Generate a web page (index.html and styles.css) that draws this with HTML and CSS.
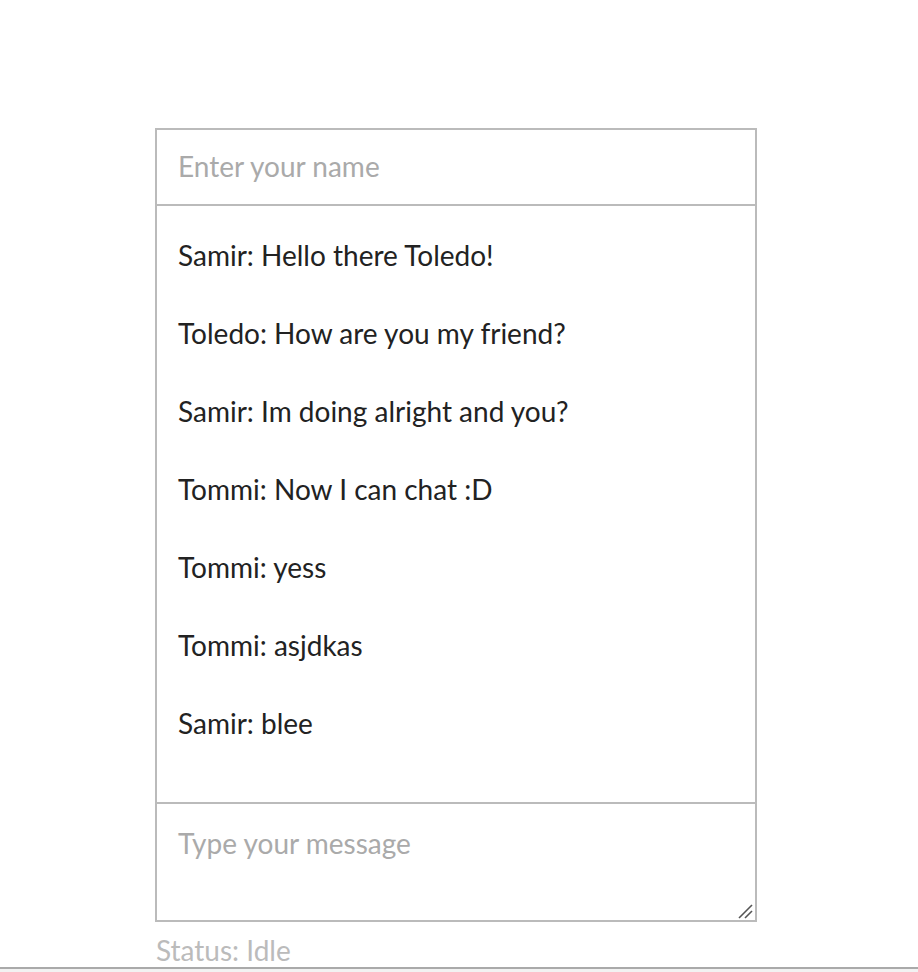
FILE: index.html
```html
<!DOCTYPE html>
<html>
<head>
<meta charset="utf-8">
<link rel="stylesheet" href="styles.css">
</head>
<body>
<div class="page">
  <div class="chat">
    <input class="name" type="text" placeholder="Enter your name">
    <div class="messages">
      <div class="msg">Samir: Hello there Toledo!</div>
      <div class="msg">Toledo: How are you my friend?</div>
      <div class="msg">Samir: Im doing alright and you?</div>
      <div class="msg">Tommi: Now I can chat :D</div>
      <div class="msg">Tommi: yess</div>
      <div class="msg">Tommi: asjdkas</div>
      <div class="msg">Samir: blee</div>
    </div>
    <div class="compose-wrap">
      <textarea class="compose" placeholder="Type your message"></textarea>
      <svg class="grip" width="16" height="16" viewBox="0 0 16 16">
        <line x1="2" y1="15" x2="15" y2="2" stroke="#555" stroke-width="1.6"/>
        <line x1="8" y1="15" x2="15" y2="8" stroke="#555" stroke-width="1.6"/>
      </svg>
    </div>
    <div class="status">Status: Idle</div>
  </div>
  <div class="rule"></div>
</div>
</body>
</html>
```
FILE: styles.css
```css
html, body {
  margin: 0;
  padding: 0;
  background: #fff;
}
body {
  font-family: Lato, "Open Sans", sans-serif;
  font-size: 28px;
  color: #222;
}
.page {
  height: 972px;
  display: flex;
  flex-direction: column;
}
.chat {
  width: 602px;
  margin-left: 155px;
  padding-top: 128px;
  display: flex;
  flex-direction: column;
  flex: 1;
}
.name {
  box-sizing: border-box;
  height: 78px;
  width: 100%;
  border: 2px solid #bbb;
  padding: 0 21px 2px;
  margin: 0;
  font: inherit;
  color: #222;
  outline: none;
}
.name::placeholder, .compose::placeholder {
  color: #aaa;
}
.messages {
  box-sizing: border-box;
  height: 596px;
  border-left: 2px solid #bbb;
  border-right: 2px solid #bbb;
  padding: 33px 21px 0;
}
.msg {
  line-height: 32px;
  margin-bottom: 46px;
}
.compose-wrap {
  position: relative;
}
.compose {
  box-sizing: border-box;
  display: block;
  width: 100%;
  height: 120px;
  margin: 0;
  border: 2px solid #bbb;
  padding: 23px 21px;
  font: inherit;
  line-height: 32px;
  color: #222;
  outline: none;
  resize: none;
}
.grip {
  position: absolute;
  right: 4px;
  bottom: 3px;
}
.status {
  color: #bbb;
  line-height: 32px;
  margin-top: 12px;
  margin-left: 1px;
}
.rule {
  height: 3px;
  border-top: 2px solid #aaa;
  background: #f2f2f2;
}
```
